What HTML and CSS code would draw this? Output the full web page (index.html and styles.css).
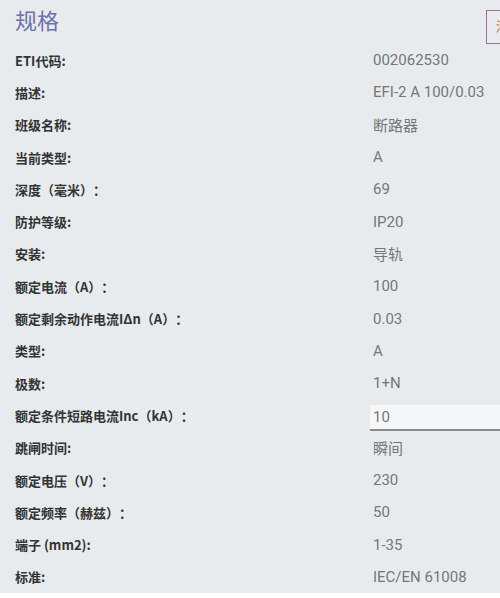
FILE: index.html
```html
<!DOCTYPE html>
<html lang="zh">
<head>
<meta charset="utf-8">
<link rel="stylesheet" href="styles.css">
</head>
<body>
<div class="page">
  <div class="head">
    <h2 class="title">规格</h2>
    <div class="tab"><span>添</span></div>
  </div>
  <div class="specs">
    <div class="row"><div class="lbl">ETI代码:</div><div class="val">002062530</div></div>
    <div class="row"><div class="lbl">描述:</div><div class="val">EFI-2 A 100/0.03</div></div>
    <div class="row"><div class="lbl">班级名称:</div><div class="val">断路器</div></div>
    <div class="row"><div class="lbl">当前类型:</div><div class="val">A</div></div>
    <div class="row"><div class="lbl">深度（毫米）：</div><div class="val">69</div></div>
    <div class="row"><div class="lbl">防护等级:</div><div class="val">IP20</div></div>
    <div class="row"><div class="lbl">安装:</div><div class="val">导轨</div></div>
    <div class="row"><div class="lbl">额定电流（A）：</div><div class="val">100</div></div>
    <div class="row"><div class="lbl">额定剩余动作电流IΔn（A）：</div><div class="val">0.03</div></div>
    <div class="row"><div class="lbl">类型:</div><div class="val">A</div></div>
    <div class="row"><div class="lbl">极数:</div><div class="val">1+N</div></div>
    <div class="row"><div class="lbl">额定条件短路电流Inc（kA）：</div><div class="val input">10</div></div>
    <div class="row"><div class="lbl">跳闸时间:</div><div class="val">瞬间</div></div>
    <div class="row"><div class="lbl">额定电压（V）：</div><div class="val">230</div></div>
    <div class="row"><div class="lbl">额定频率（赫兹）：</div><div class="val">50</div></div>
    <div class="row"><div class="lbl">端子 (mm2):</div><div class="val">1-35</div></div>
    <div class="row"><div class="lbl">标准:</div><div class="val">IEC/EN 61008</div></div>
  </div>
</div>
<div class="foot"></div>
</body>
</html>
```
FILE: styles.css
```css
html, body {
  margin: 0;
  padding: 0;
  background: #ffffff;
}
body {
  width: 500px;
  height: 598px;
  overflow: hidden;
  font-family: "Noto Sans CJK SC", "Noto Sans", sans-serif;
}
.page {
  background: #e8ebee;
  height: 593px;
  overflow: hidden;
}
.head {
  display: flex;
  justify-content: space-between;
  align-items: flex-start;
  height: 44px;
}
.title {
  margin: 4px 0 0 15px;
  font-size: 22px;
  line-height: 30px;
  font-weight: 400;
  color: #6c72ac;
}
.tab {
  margin-top: 10px;
  width: 30px;
  height: 34px;
  border: 1.5px solid #9c6f9e;
  box-sizing: border-box;
  margin-right: -16px;
  overflow: hidden;
  padding: 7px 0 0 9px;
}
.tab span {
  display: block;
  font-size: 13px;
  line-height: 16px;
  color: #b8793f;
}
.specs {
  display: flex;
  flex-direction: column;
}
.row {
  display: grid;
  grid-template-columns: 370px 1fr;
  height: 32.3px;
  align-items: center;
}
.lbl {
  padding-left: 15px;
  font-size: 13px;
  font-weight: 700;
  color: #333333;
  white-space: nowrap;
  text-spacing-trim: space-all;
}
.val {
  padding-left: 3px;
  font-family: Roboto, "Noto Sans CJK SC", sans-serif;
  font-size: 15px;
  font-weight: 400;
  color: #767676;
}
.input {
  background: #f6f7f8;
  height: 24px;
  line-height: 24px;
  border-bottom: 2px solid #8a8a8a;
  align-self: end;
  margin-bottom: 1px;
}
.foot {
  height: 5px;
  background: #fff;
}
```
